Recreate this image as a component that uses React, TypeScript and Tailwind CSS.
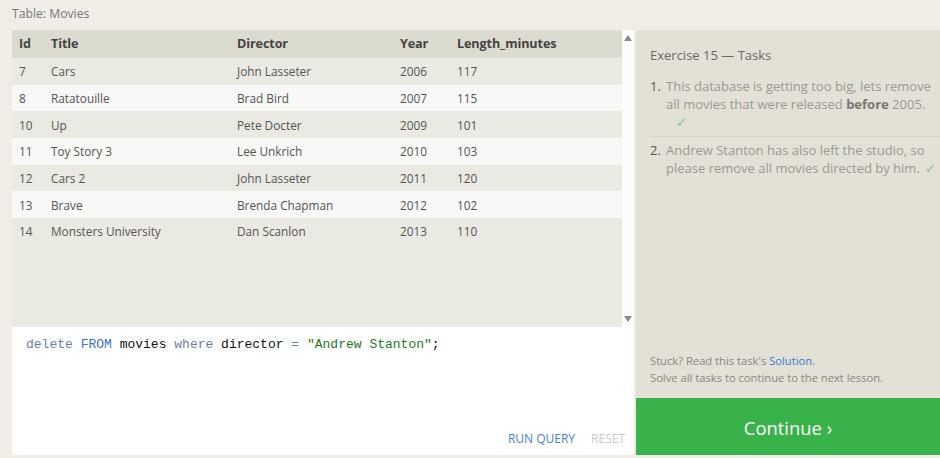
import React from "react";

const rows = [
  { id: 7, title: "Cars", director: "John Lasseter", year: 2006, length: 117 },
  { id: 8, title: "Ratatouille", director: "Brad Bird", year: 2007, length: 115 },
  { id: 10, title: "Up", director: "Pete Docter", year: 2009, length: 101 },
  { id: 11, title: "Toy Story 3", director: "Lee Unkrich", year: 2010, length: 103 },
  { id: 12, title: "Cars 2", director: "John Lasseter", year: 2011, length: 120 },
  { id: 13, title: "Brave", director: "Brenda Chapman", year: 2012, length: 102 },
  { id: 14, title: "Monsters University", director: "Dan Scanlon", year: 2013, length: 110 },
];

function Check({ className = "" }: { className?: string }) {
  return <span className={"text-[#7cc98a] " + className}>✓</span>;
}

export default function App() {
  return (
    <div className="w-[940px] h-[458px] bg-[#efede6] font-['Open_Sans',sans-serif] flex flex-col overflow-hidden">
      {/* title */}
      <div className="h-[30px] pl-3 pt-[5px] text-[12.2px] text-[#777]">Table: Movies</div>

      <div className="flex flex-1 pl-3">
        {/* left: table + editor */}
        <div className="w-[622px] flex flex-col">
          <div className="h-[297px] flex bg-[#eae9e2]">
            <div className="flex-1">
              <div className="h-[28px] pt-[1px] bg-[#dcdbd0] flex items-center text-[12.6px] tracking-[-0.1px] font-bold text-[#444]">
                <div className="w-[39px] pl-[7px]">Id</div>
                <div className="w-[186px]">Title</div>
                <div className="w-[163px]">Director</div>
                <div className="w-[57px]">Year</div>
                <div>Length_minutes</div>
              </div>
              {rows.map((r, i) => (
                <div
                  key={r.id}
                  className={
                    "h-[26.67px] pt-[2px] flex items-center text-[11.8px] text-[#555] " +
                    (i % 2 === 0 ? "bg-[#eae9e2]" : "bg-[#f8f8f6]")
                  }
                >
                  <div className="w-[39px] pl-[7px]">{r.id}</div>
                  <div className="w-[186px]">{r.title}</div>
                  <div className="w-[163px]">{r.director}</div>
                  <div className="w-[57px]">{r.year}</div>
                  <div>{r.length}</div>
                </div>
              ))}
            </div>
            {/* scrollbar */}
            <div className="w-[12px] bg-[#fcfcfc] flex flex-col items-center justify-between py-[5px]">
              <svg width="8" height="6" viewBox="0 0 8 6">
                <path d="M4 0 L8 6 L0 6 Z" fill="#8a8a8a" />
              </svg>
              <svg width="8" height="6" viewBox="0 0 8 6">
                <path d="M0 0 L8 0 L4 6 Z" fill="#8a8a8a" />
              </svg>
            </div>
          </div>

          {/* editor */}
          <div className="h-[128px] bg-white flex flex-col justify-between">
            <div className="pl-[14px] pt-[8px] font-['Liberation_Mono',monospace] text-[13px]">
              <span className="text-[#6b7cb3]">delete</span>{" "}
              <span className="text-[#3f73c8]">FROM</span>{" "}
              <span className="text-[#111]">movies</span>{" "}
              <span className="text-[#6b7cb3]">where</span>{" "}
              <span className="text-[#111]">director</span>{" "}
              <span className="text-[#6b7cb3]">=</span>{" "}
              <span className="text-[#1d7a1d]">"Andrew Stanton"</span>
              <span className="text-[#111]">;</span>
            </div>
            <div className="flex justify-end gap-4 pr-[9px] pb-[7px] text-[12px]">
              <span className="text-[#4a7fd6]">RUN QUERY</span>
              <span className="text-[#c8c8c8]">RESET</span>
            </div>
          </div>
        </div>

        {/* right panel */}
        <div className="ml-[2px] flex-1 flex flex-col">
          <div className="flex-1 bg-[#e3e0d5] flex flex-col justify-between">
            <div className="pl-[14px] pt-[16px]">
              <div className="text-[13px] text-[#6a6a6a]">Exercise 15 — Tasks</div>
              <ol className="mt-[11px] text-[13px] leading-[18px] text-[#9a9a96]">
                <li className="flex pb-[5px] border-b border-[#d6d3c8]">
                  <span className="w-[16px] shrink-0 text-[#555]">1.</span>
                  <span className="w-[274px]">
                    This database is getting too big, lets remove all movies that were released{" "}
                    <b className="text-[#777]">before</b> 2005.
                    <br />
                    <Check className="ml-[10px]" />
                  </span>
                </li>
                <li className="flex pt-[4px]">
                  <span className="w-[16px] shrink-0 text-[#555]">2.</span>
                  <span className="w-[274px]">
                    Andrew Stanton has also left the studio, so
                    <br />
                    <span className="whitespace-nowrap">
                      please remove all movies directed by him.
                      <Check className="ml-[5px]" />
                    </span>
                  </span>
                </li>
              </ol>
            </div>
            <div className="pl-[14px] pb-[12px] text-[11.2px] leading-[17px] text-[#888]">
              <div>
                Stuck? Read this task's <span className="text-[#3a7bd5]">Solution</span>.
              </div>
              <div>Solve all tasks to continue to the next lesson.</div>
            </div>
          </div>
          <div className="h-[57px] pt-[2px] bg-[#38b249] flex items-center justify-center text-white text-[18.4px]">
            Continue ›
          </div>
        </div>
      </div>
      <div className="h-[3px]" />
    </div>
  );
}
